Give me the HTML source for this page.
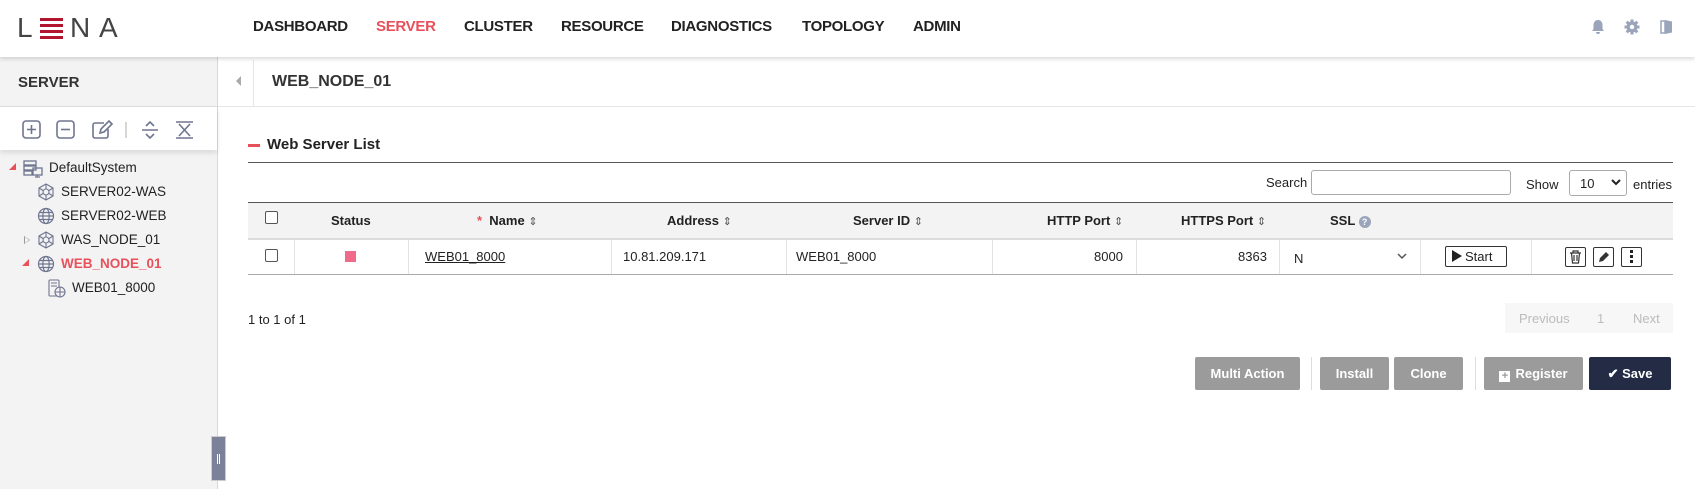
<!DOCTYPE html>
<html><head><meta charset="utf-8"><style>
*{box-sizing:border-box;margin:0;padding:0}
body{width:1695px;height:489px;overflow:hidden;background:#fff;font-family:"Liberation Sans",sans-serif;color:#222;position:relative;font-size:13px}
.a{position:absolute;white-space:nowrap}
.nav{top:18px;font-size:15px;font-weight:bold;color:#222;letter-spacing:-0.3px}
.hd{font-weight:bold;font-size:13px;top:213px;color:#222}
.cell{top:249px;font-size:13px}
.vd{position:absolute;top:240px;height:34px;width:1px;background:#e3e3e3}
.btn{position:absolute;top:357px;height:33px;background:#9b9b9b;color:#fff;font-weight:bold;font-size:13px;text-align:center;line-height:33px;border-radius:2px}
.tree{font-size:13.5px;color:#222}
.sort{font-size:11px;color:#555;font-weight:normal}
</style></head><body>
<div class="a" style="left:0;top:0;width:1695px;height:57px;background:#fff;box-shadow:0 2px 4px rgba(0,0,0,.15);z-index:2"></div>
<div class="a" style="z-index:3;left:17px;top:12px;font-size:28px;color:#444">L</div>
<div class="a" style="z-index:3;left:40px;top:18px;width:23px">
 <div style="height:3px;background:#b3152e;margin-bottom:3px"></div><div style="height:3px;background:#b3152e;margin-bottom:3px"></div><div style="height:3px;background:#b3152e;margin-bottom:3px"></div><div style="height:3px;background:#b3152e"></div></div>
<div class="a" style="z-index:3;left:70px;top:12px;font-size:28px;color:#444">N</div>
<div class="a" style="z-index:3;left:99px;top:12px;font-size:28px;color:#444">A</div>
<div class="a nav" style="z-index:3;left:253px">DASHBOARD</div>
<div class="a nav" style="z-index:3;left:376px;color:#e8505b">SERVER</div>
<div class="a nav" style="z-index:3;left:464px">CLUSTER</div>
<div class="a nav" style="z-index:3;left:561px">RESOURCE</div>
<div class="a nav" style="z-index:3;left:671px">DIAGNOSTICS</div>
<div class="a nav" style="z-index:3;left:802px">TOPOLOGY</div>
<div class="a nav" style="z-index:3;left:913px">ADMIN</div>
<svg class="a" style="z-index:3;left:1590px;top:19px" width="16" height="16" viewBox="0 0 16 16"><path d="M8 1c-3 0-4.5 2.5-4.5 5v4L2 12h12l-1.5-2V6C12.5 3.5 11 1 8 1z M6 13h4a2 2 0 0 1-4 0z" fill="#9aa5bb"/></svg>
<svg class="a" style="z-index:3;left:1624px;top:19px" width="16" height="16" viewBox="0 0 16 16"><g fill="#9aa5bb"><circle cx="8" cy="8" r="5.5"/><rect x="6.5" y="0.5" width="3" height="15"/><rect x="0.5" y="6.5" width="15" height="3"/><rect x="6.5" y="0.5" width="3" height="15" transform="rotate(45 8 8)"/><rect x="6.5" y="0.5" width="3" height="15" transform="rotate(-45 8 8)"/></g><circle cx="8" cy="8" r="2.2" fill="#fff"/></svg>
<svg class="a" style="z-index:3;left:1660px;top:19px" width="14" height="16" viewBox="0 0 14 16"><path d="M1 2h4v12H1z" fill="none" stroke="#9aa5bb" stroke-width="1.5"/><path d="M5 1l7 1.5v11L5 15z" fill="#9aa5bb"/></svg>

<div class="a" style="left:0;top:57px;width:218px;height:432px;background:#f3f3f3;border-right:1px solid #d8d8d8"></div>
<div class="a" style="left:0;top:106px;width:217px;height:1px;background:#dcdcdc"></div>
<div class="a" style="left:18px;top:74px;font-size:15px;font-weight:bold;color:#333">SERVER</div>
<div class="a" style="left:0;top:107px;width:217px;height:43px;background:#fff;box-shadow:0 3px 5px rgba(0,0,0,.1)"></div>
<svg class="a" style="left:22px;top:120px" width="180" height="20" viewBox="0 0 180 20" fill="none" stroke="#6e7590" stroke-width="1.6">
 <rect x="1" y="1" width="17" height="17" rx="3"/><path d="M9.5 5v9M5 9.5h9"/>
 <rect x="35" y="1" width="17" height="17" rx="3"/><path d="M39 9.5h9"/>
 <path d="M82 3h-9a2 2 0 0 0-2 2v11a2 2 0 0 0 2 2h11a2 2 0 0 0 2-2v-7"/><path d="M78 13l1-4 8-8 3 3-8 8z"/>
 <path d="M104 2v16" stroke="#ccc"/>
 <path d="M120 10h16M124 6l4-4 4 4M124 14l4 4 4-4"/>
 <path d="M154 2h17M154 18h17M157 4l5.5 6 5.5-6M157 16l5.5-6 5.5 6"/>
</svg>
<div class="a" style="left:9px;top:163px;width:0;height:0;border-left:7px solid transparent;border-bottom:7px solid #e8505b"></div>
<svg class="a" style="left:23px;top:160px" width="20" height="18" viewBox="0 0 20 18" fill="none" stroke="#6e7590" stroke-width="1.3"><rect x="1" y="1" width="12" height="4"/><rect x="1" y="6" width="12" height="4"/><rect x="1" y="11" width="8" height="4"/><rect x="10" y="8" width="9" height="7"/><path d="M14 15v2M12 17h5"/></svg>
<div class="a tree" style="left:49px;top:160px">DefaultSystem</div>
<svg class="a" style="left:37px;top:183px" width="18" height="18" viewBox="0 0 18 18" fill="none" stroke="#6e7590" stroke-width="1.1"><circle cx="9" cy="9" r="3"/><path d="M9 1l7 4v8l-7 4-7-4V5z"/><path d="M9 1v5M9 12v5M2 5l4 2.5M16 5l-4 2.5M2 13l4-2.5M16 13l-4-2.5"/></svg>
<div class="a tree" style="left:61px;top:184px">SERVER02-WAS</div>
<svg class="a" style="left:37px;top:207px" width="18" height="18" viewBox="0 0 18 18" fill="none" stroke="#6e7590" stroke-width="1.2"><circle cx="9" cy="9" r="7.5"/><ellipse cx="9" cy="9" rx="3.2" ry="7.5"/><path d="M1.5 9h15M2.5 5.5h13M2.5 12.5h13"/></svg>
<div class="a tree" style="left:61px;top:208px">SERVER02-WEB</div>
<div class="a" style="left:24px;top:236px;width:0;height:0;border-top:4px solid transparent;border-bottom:4px solid transparent;border-left:6px solid #999"></div>
<div class="a" style="left:25px;top:237px;width:0;height:0;border-top:3px solid transparent;border-bottom:3px solid transparent;border-left:4px solid #f3f3f3"></div>
<svg class="a" style="left:37px;top:231px" width="18" height="18" viewBox="0 0 18 18" fill="none" stroke="#6e7590" stroke-width="1.1"><circle cx="9" cy="9" r="3"/><path d="M9 1l7 4v8l-7 4-7-4V5z"/><path d="M9 1v5M9 12v5M2 5l4 2.5M16 5l-4 2.5M2 13l4-2.5M16 13l-4-2.5"/></svg>
<div class="a tree" style="left:61px;top:232px">WAS_NODE_01</div>
<div class="a" style="left:22px;top:259px;width:0;height:0;border-left:7px solid transparent;border-bottom:7px solid #e8505b"></div>
<svg class="a" style="left:37px;top:255px" width="18" height="18" viewBox="0 0 18 18" fill="none" stroke="#6e7590" stroke-width="1.2"><circle cx="9" cy="9" r="7.5"/><ellipse cx="9" cy="9" rx="3.2" ry="7.5"/><path d="M1.5 9h15M2.5 5.5h13M2.5 12.5h13"/></svg>
<div class="a tree" style="left:61px;top:256px;color:#e8505b;font-weight:bold">WEB_NODE_01</div>
<svg class="a" style="left:48px;top:279px" width="18" height="19" viewBox="0 0 18 19" fill="none" stroke="#6e7590" stroke-width="1.1"><rect x="1" y="1" width="10" height="16" rx="1"/><path d="M3 4h6M3 7h6"/><circle cx="12" cy="13" r="5" fill="#f3f3f3"/><path d="M7 13h10M12 8v10"/></svg>
<div class="a tree" style="left:72px;top:280px">WEB01_8000</div>
<div class="a" style="left:211px;top:436px;width:15px;height:45px;background:#7a8199;border:1px solid #ccc"></div>
<div class="a" style="left:217px;top:454px;width:3px;height:10px;border-left:1px solid #fff;border-right:1px solid #fff"></div>

<div class="a" style="left:218px;top:106px;width:1477px;height:1px;background:#e6e6e6"></div>
<div class="a" style="left:253px;top:60px;width:1px;height:46px;background:#e6e6e6"></div>
<div class="a" style="left:236px;top:76px;width:0;height:0;border-top:5px solid transparent;border-bottom:5px solid transparent;border-right:5px solid #aaa"></div>
<div class="a" style="left:272px;top:73px;font-size:16px;font-weight:bold;color:#333">WEB_NODE_01</div>

<div class="a" style="left:248px;top:144px;width:12px;height:3px;background:#e8505b"></div>
<div class="a" style="left:267px;top:136px;font-size:15px;font-weight:bold;color:#222">Web Server List</div>
<div class="a" style="left:248px;top:162px;width:1425px;height:1px;background:#555"></div>

<div class="a" style="left:1266px;top:175px;font-size:13px">Search</div>
<div class="a" style="left:1311px;top:170px;width:200px;height:25px;border:1px solid #aaa;border-radius:3px"></div>
<div class="a" style="left:1526px;top:177px;font-size:13px">Show</div>
<div class="a" style="left:1569px;top:170px;width:58px;height:26px;border:1px solid #aaa;border-radius:3px;font-size:13px;padding:5px 0 0 10px">10</div>
<svg class="a" style="left:1611px;top:179px" width="10" height="7" viewBox="0 0 10 7"><path d="M1 1l4 4 4-4" fill="none" stroke="#222" stroke-width="2"/></svg>
<div class="a" style="left:1633px;top:177px;font-size:13px">entries</div>

<div class="a" style="left:248px;top:202px;width:1425px;height:38px;background:#f3f3f3;border-top:1px solid #555;border-bottom:2px solid #dcdcdc"></div>
<div class="a" style="left:248px;top:274px;width:1425px;height:1px;background:#aaa"></div>
<div class="a" style="left:265px;top:211px;width:13px;height:13px;border:1px solid #555;border-radius:2px;background:#fff"></div>
<div class="a hd" style="left:331px">Status</div>
<div class="a hd" style="left:477px"><span style="color:#e8505b">*</span>&nbsp; Name <span class="sort">&#8661;</span></div>
<div class="a hd" style="left:667px">Address <span class="sort">&#8661;</span></div>
<div class="a hd" style="left:853px">Server ID <span class="sort">&#8661;</span></div>
<div class="a hd" style="left:1047px">HTTP Port <span class="sort">&#8661;</span></div>
<div class="a hd" style="left:1181px">HTTPS Port <span class="sort">&#8661;</span></div>
<div class="a hd" style="left:1330px">SSL <span style="display:inline-block;width:12px;height:12px;border-radius:6px;background:#9aa5bb;color:#fff;font-size:9px;text-align:center;line-height:12px;vertical-align:0">?</span></div>

<div class="vd" style="left:294px"></div><div class="vd" style="left:408px"></div><div class="vd" style="left:611px"></div><div class="vd" style="left:786px"></div><div class="vd" style="left:992px"></div><div class="vd" style="left:1136px"></div><div class="vd" style="left:1279px"></div><div class="vd" style="left:1420px"></div><div class="vd" style="left:1531px"></div>
<div class="a" style="left:265px;top:249px;width:13px;height:13px;border:1px solid #555;border-radius:2px;background:#fff"></div>
<div class="a" style="left:345px;top:251px;width:11px;height:11px;background:#f06b8a"></div>
<div class="a cell" style="left:425px;text-decoration:underline">WEB01_8000</div>
<div class="a cell" style="left:623px">10.81.209.171</div>
<div class="a cell" style="left:796px">WEB01_8000</div>
<div class="a cell" style="left:1094px">8000</div>
<div class="a cell" style="left:1238px">8363</div>
<div class="a cell" style="left:1294px;top:251px">N</div>
<svg class="a" style="left:1397px;top:253px" width="10" height="7" viewBox="0 0 10 7"><path d="M1 1l4 4 4-4" fill="none" stroke="#555" stroke-width="1.5"/></svg>
<div class="a" style="left:1445px;top:246px;width:62px;height:21px;border:1px solid #333;border-radius:2px;font-size:13px;padding:2px 0 0 19px">Start</div>
<div class="a" style="left:1452px;top:250px;width:0;height:0;border-top:6px solid transparent;border-bottom:6px solid transparent;border-left:10px solid #222"></div>
<div class="a" style="left:1565px;top:247px;width:21px;height:20px;border:1px solid #333;border-radius:2px"></div>
<svg class="a" style="left:1569px;top:250px" width="13" height="14" viewBox="0 0 13 14" fill="none" stroke="#333" stroke-width="1.2"><path d="M1 3h11M4 3V1h5v2M2.5 3l1 10h6l1-10M5 5v6M8 5v6"/></svg>
<div class="a" style="left:1593px;top:247px;width:21px;height:20px;border:1px solid #333;border-radius:2px"></div>
<svg class="a" style="left:1597px;top:251px" width="13" height="13" viewBox="0 0 13 13"><path d="M2 11l1-4 6-6 3 3-6 6z" fill="#333"/></svg>
<div class="a" style="left:1621px;top:247px;width:21px;height:20px;border:1px solid #333;border-radius:2px"></div>
<div class="a" style="left:1630px;top:250px;width:3px;height:3px;background:#222;box-shadow:0 5px 0 #222,0 10px 0 #222"></div>

<div class="a" style="left:248px;top:312px;font-size:13px">1 to 1 of 1</div>
<div class="a" style="left:1505px;top:303px;width:168px;height:30px;background:#f7f7f7"></div>
<div class="a" style="left:1519px;top:311px;font-size:13px;color:#bbb">Previous</div>
<div class="a" style="left:1597px;top:311px;font-size:13px;color:#bbb">1</div>
<div class="a" style="left:1633px;top:311px;font-size:13px;color:#bbb">Next</div>

<div class="btn" style="left:1195px;width:105px">Multi Action</div>
<div class="a" style="left:1311px;top:357px;width:1px;height:33px;background:#ddd"></div>
<div class="btn" style="left:1320px;width:69px">Install</div>
<div class="btn" style="left:1394px;width:69px">Clone</div>
<div class="a" style="left:1475px;top:357px;width:1px;height:33px;background:#ddd"></div>
<div class="btn" style="left:1484px;width:99px"><span style="display:inline-block;width:11px;height:11px;background:#fff;color:#9b9b9b;font-size:11px;line-height:11px;vertical-align:-1px;margin-right:5px">+</span>Register</div>
<div class="btn" style="left:1589px;width:82px;background:#232b45">&#10004; Save</div>
</body></html>
